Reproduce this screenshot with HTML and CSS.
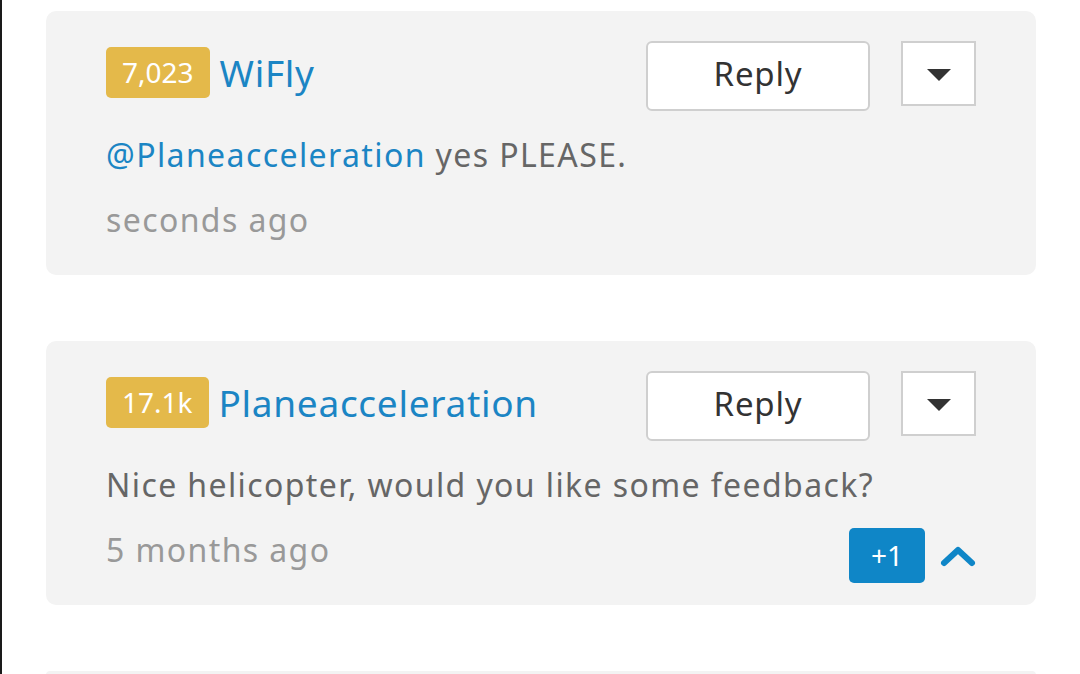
FILE: index.html
```html
<!DOCTYPE html>
<html>
<head>
<meta charset="utf-8">
<link rel="stylesheet" href="styles.css">
</head>
<body>
<div class="list">
  <div class="card">
    <div class="head">
      <div class="who">
        <span class="badge">7,023</span>
        <span class="name">WiFly</span>
      </div>
      <div class="actions">
        <button class="reply">Reply</button>
        <button class="drop"><span class="tri"></span></button>
      </div>
    </div>
    <p class="text"><span class="mention">@Planeacceleration</span> yes PLEASE.</p>
    <div class="meta">
      <span class="time">seconds ago</span>
    </div>
  </div>

  <div class="card">
    <div class="head">
      <div class="who">
        <span class="badge">17.1k</span>
        <span class="name">Planeacceleration</span>
      </div>
      <div class="actions">
        <button class="reply">Reply</button>
        <button class="drop"><span class="tri"></span></button>
      </div>
    </div>
    <p class="text">Nice helicopter, would you like some feedback?</p>
    <div class="meta">
      <span class="time">5 months ago</span>
      <div class="votes">
        <span class="plus">+1</span>
        <svg class="chev" width="36" height="24" viewBox="0 0 36 24"><polyline points="4,19 18,6 32,19" fill="none" stroke="#0f86c7" stroke-width="6" stroke-linecap="round" stroke-linejoin="round"/></svg>
      </div>
    </div>
  </div>

  <div class="card card-peek"></div>
</div>
</body>
</html>
```

FILE: styles.css
```css
html, body {
  margin: 0;
  padding: 0;
  background: #fff;
}
body {
  border-left: 2px solid #1a1a1a;
  height: 674px;
  box-sizing: border-box;
  overflow: hidden;
  font-family: "Noto Sans", "Open Sans", sans-serif;
}
.list {
  padding: 11px 44px 0 44px;
  display: flex;
  flex-direction: column;
  gap: 66px;
}
.card {
  background: #f3f3f3;
  border-radius: 10px;
  padding: 30px 60px 22px 60px;
}
.card-peek {
  padding: 0;
  height: 4px;
  border-radius: 10px 10px 0 0;
}
.head {
  display: flex;
  justify-content: space-between;
  align-items: flex-start;
}
.who {
  display: flex;
  align-items: center;
  margin-top: 6px;
}
.badge {
  background: #e4b94a;
  color: #fff;
  font-size: 28px;
  height: 51px;
  line-height: 51px;
  padding: 0 16px;
  border-radius: 5px;
}
.name {
  color: #1b85c4;
  font-size: 37px;
  letter-spacing: 0.7px;
  margin-left: 10px;
  line-height: 51px;
}
.actions {
  display: flex;
  align-items: flex-start;
  gap: 31px;
}
.reply {
  width: 224px;
  height: 70px;
  background: #fff;
  border: 2px solid #cfcfcf;
  border-radius: 6px;
  font-family: inherit;
  font-size: 33px;
  letter-spacing: 0.8px;
  color: #333;
  padding: 0 0 5px 0;
}
.drop {
  width: 75px;
  height: 65px;
  background: #fff;
  border: 2px solid #cfcfcf;
  border-radius: 0;
  padding: 0;
  display: flex;
  align-items: center;
  justify-content: center;
}
.tri {
  width: 0;
  height: 0;
  border-left: 12px solid transparent;
  border-right: 12px solid transparent;
  border-top: 12px solid #333;
  margin-top: 2px;
}
.text {
  margin: 22px 0 0 0;
  font-size: 32px;
  letter-spacing: 1.4px;
  line-height: 44px;
  color: #666;
}
.mention {
  color: #1b85c4;
}
.meta {
  display: flex;
  justify-content: space-between;
  align-items: flex-start;
  min-height: 55px;
  margin-top: 21px;
}
.time {
  font-size: 32px;
  letter-spacing: 1.4px;
  line-height: 44px;
  color: #999;
}
.votes {
  display: flex;
  align-items: center;
  gap: 15px;
}
.plus {
  background: #0f86c7;
  color: #fff;
  width: 76px;
  height: 55px;
  line-height: 55px;
  text-align: center;
  font-size: 28px;
  border-radius: 5px;
}
.chev {
  display: block;
}
```
